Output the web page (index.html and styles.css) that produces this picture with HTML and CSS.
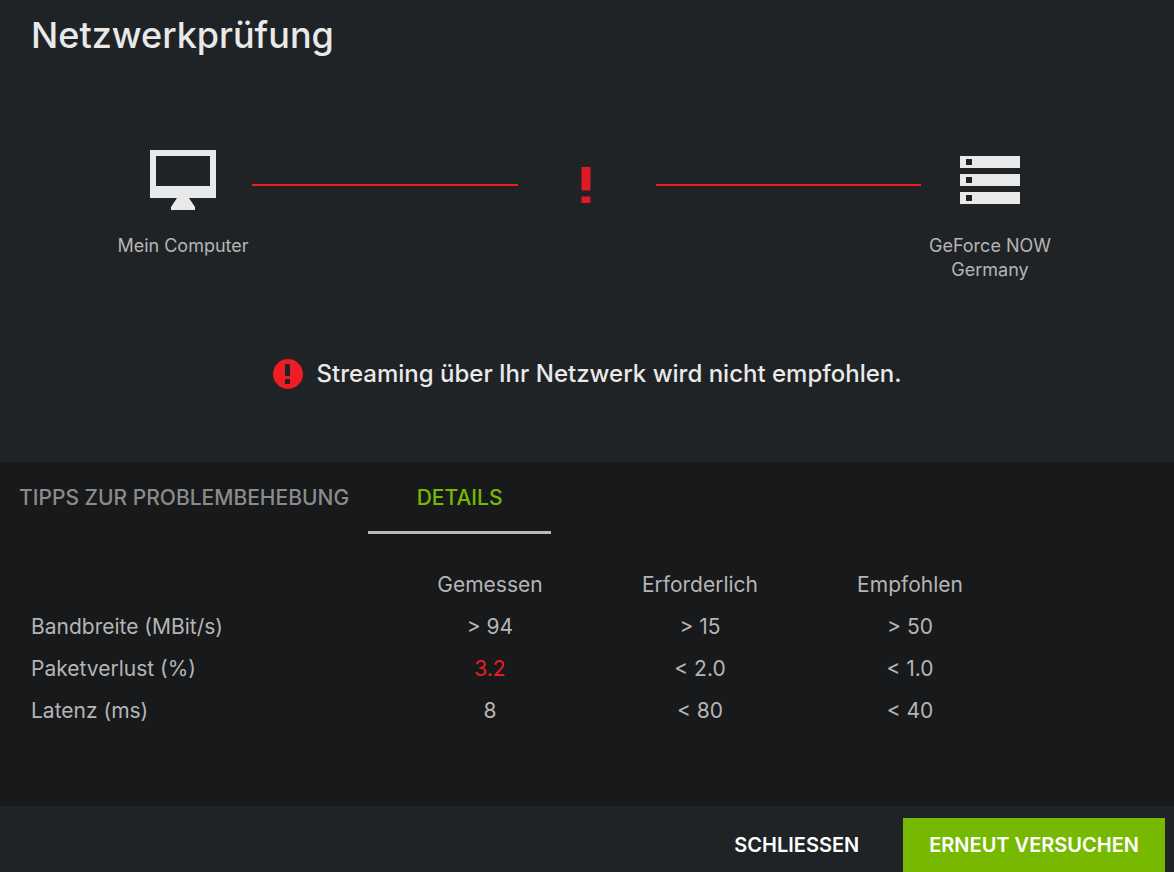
FILE: index.html
```
<!DOCTYPE html>
<html lang="de">
  <head>
    <meta charset="UTF-8" />
    <meta name="viewport" content="width=device-width, initial-scale=1.0" />
    <title>Netzwerkprüfung</title>
    <link rel="stylesheet" href="styles.css">
  </head>
  <body>
    <main class="summary">
      <h1 class="title">Netzwerkprüfung</h1>

      <div class="route">
        <div class="node">
          <svg class="node-icon" viewBox="0 0 72 72" aria-hidden="true">
            <path fill-rule="evenodd" d="M3 3h66v48H3zM9 9v30h54V9z" />
            <path d="M30 51h12l6 9v3H24v-3z" />
          </svg>
          <span>Mein Computer</span>
        </div>
        <div class="line"></div>
        <div class="node">
          <svg class="node-icon alert" viewBox="0 0 72 72" aria-hidden="true">
            <path d="M30.5 20h9v23.5h-9zM30.5 49.5h9V56h-9z" />
          </svg>
        </div>
        <div class="line"></div>
        <div class="node">
          <svg class="node-icon" viewBox="0 0 72 72" aria-hidden="true">
            <path fill-rule="evenodd" d="M6 9h60v12H6zM12 12v6h6v-6zM6 27h60v12H6zM12 30v6h6v-6zM6 45h60v12H6zM12 48v6h6v-6z" />
          </svg>
          <span>GeForce NOW<br />Germany</span>
        </div>
      </div>

      <p class="result">
        <svg class="result-icon" viewBox="0 0 30 30" aria-hidden="true">
          <path fill-rule="evenodd" d="M15 0a15 15 0 1 0 0 30a15 15 0 1 0 0-30zM12 5v12h5V5zM12 20v5h5v-5z" />
        </svg>
        Streaming über Ihr Netzwerk wird nicht empfohlen.
      </p>
    </main>

    <section class="panel">
      <div class="tabs" role="tablist">
        <button class="tab" role="tab" aria-selected="false">TIPPS ZUR PROBLEMBEHEBUNG</button>
        <button class="tab active" role="tab" aria-selected="true">DETAILS</button>
      </div>
      <table class="details">
        <thead>
          <tr>
            <td></td>
            <th>Gemessen</th>
            <th>Erforderlich</th>
            <th>Empfohlen</th>
          </tr>
        </thead>
        <tbody>
          <tr>
            <th>Bandbreite (MBit/s)</th>
            <td>&gt; 94</td>
            <td>&gt; 15</td>
            <td>&gt; 50</td>
          </tr>
          <tr>
            <th>Paketverlust (%)</th>
            <td class="bad">3.2</td>
            <td>&lt; 2.0</td>
            <td>&lt; 1.0</td>
          </tr>
          <tr>
            <th>Latenz (ms)</th>
            <td>8</td>
            <td>&lt; 80</td>
            <td>&lt; 40</td>
          </tr>
        </tbody>
      </table>
    </section>

    <footer class="actions">
      <button class="btn">SCHLIESSEN</button>
      <button class="btn primary">ERNEUT VERSUCHEN</button>
    </footer>
  </body>
</html>
```

FILE: styles.css
```
* {
  box-sizing: border-box;
}
body {
  margin: 0;
  min-height: 100vh;
  display: flex;
  flex-direction: column;
  background-color: #1f2326;
  color: #b5b5b5;
  font-family: Inter, Roboto, sans-serif;
}
button {
  border: none;
  background: none;
  font-family: inherit;
  cursor: pointer;
}
/* Upper part */
.summary {
  padding: 11px 0 68px;
}
.title {
  margin: 0 31px;
  font-size: 36px;
  font-weight: 500;
  line-height: 48px;
  color: #e9e9e9;
}
/* Computer - problem - server */
.route {
  display: flex;
  align-items: flex-start;
  margin-top: 88px;
  padding: 0 115px 0 114px;
}
.node {
  width: 138px;
  display: flex;
  flex-direction: column;
  align-items: center;
  gap: 15px;
  font-size: 18px;
  line-height: 24px;
  text-align: center;
}
.node-icon {
  width: 72px;
  height: 72px;
  fill: #e9e9e9;
}
.node-icon.alert {
  fill: #dc1b22;
}
.line {
  flex: 1;
  height: 2px;
  margin-top: 37px;
  background-color: #ee1c23;
}
.result {
  display: flex;
  justify-content: center;
  align-items: center;
  gap: 14px;
  margin: 72px 0 0;
  font-size: 24px;
  font-weight: 500;
  line-height: 40px;
  color: #e9e9e9;
}
.result-icon {
  width: 30px;
  height: 30px;
  fill: #ee1c23;
}
/* Lower part */
.panel {
  flex: 1;
  background-color: #18191b;
}
.tabs {
  display: flex;
}
.tab {
  height: 72px;
  padding: 2px 19px 0;
  border-bottom: 3px solid transparent;
  font-size: 21px;
  font-weight: 500;
  color: #8b8b8b;
}
.tab.active {
  min-width: 183px;
  border-color: #b9b9b9;
  color: #76b900;
}
.details {
  table-layout: fixed;
  width: 1015px;
  max-width: 100%;
  margin-top: 30px;
  border-collapse: collapse;
  font-size: 21px;
  line-height: 42px;
}
.details th,
.details td {
  width: 210px;
  padding: 0;
  font-weight: 400;
  text-align: center;
}
.details tr > :first-child {
  width: auto;
  padding-left: 31px;
  text-align: left;
}
.details .bad {
  color: #ee1c23;
}
/* Bottom bar */
.actions {
  display: flex;
  justify-content: flex-end;
  gap: 18px;
  padding: 12px 9px 0 0;
}
.btn {
  height: 54px;
  padding: 0 26px;
  font-size: 20px;
  font-weight: 600;
  color: #fff;
}
.btn.primary {
  background-color: #76b900;
}
```
